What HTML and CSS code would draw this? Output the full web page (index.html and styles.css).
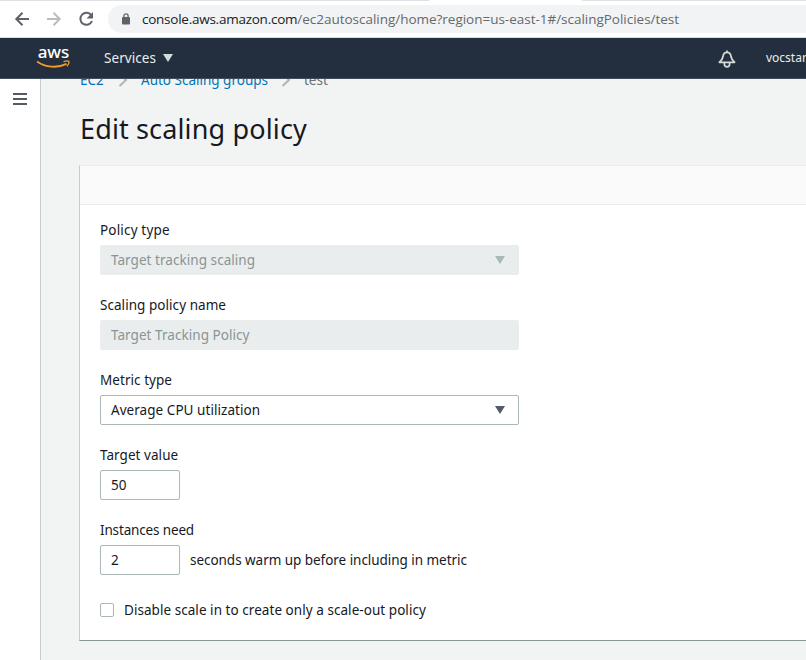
FILE: index.html
```html
<!DOCTYPE html>
<html lang="en">
<head>
<meta charset="utf-8">
<title>Edit scaling policy</title>
<link rel="stylesheet" href="styles.css">
</head>
<body>
<div class="tabstrip"><span class="strip-left"></span><span class="strip-right"></span></div>
<div class="toolbar">
  <svg class="nav-icon" width="16" height="16" viewBox="0 0 16 16"><path d="M15 8H2.500M8.500 1.800 2.300 8l6.200 6.200" fill="none" stroke="#5f6368" stroke-width="2"/></svg>
  <svg class="nav-icon" width="16" height="16" viewBox="0 0 16 16"><path d="M1 8h12.500M7.500 1.800 13.700 8l-6.200 6.200" fill="none" stroke="#babcbe" stroke-width="2"/></svg>
  <svg class="nav-icon" width="16" height="16" viewBox="0 0 16 16"><path d="M13.300 4.300A6 6 0 1 0 14 10" fill="none" stroke="#5f6368" stroke-width="2"/><path d="M15 1v6.500H8.500z" fill="#5f6368"/></svg>
  <div class="omnibox">
    <svg width="10" height="13" viewBox="0 0 10 13"><rect x="1" y="4" width="8" height="7.500" rx="1" fill="#5f6368"/><path d="M2.900 5V2.900a2.100 2.100 0 0 1 4.200 0V5" fill="none" stroke="#5f6368" stroke-width="1.300"/></svg>
    <span class="url"><b>console.aws.amazon.com</b>/ec2autoscaling/home?region=us-east-1#/scalingPolicies/test</span>
  </div>
</div>
<header class="topnav">
  <div class="logo">
    <span class="logo-text">aws</span>
    <svg class="smile" width="35" height="9" viewBox="0 0 35 9"><path d="M1 1.500C9.500 7.600 21.500 8.300 30.500 3.800" fill="none" stroke="#f7981f" stroke-width="1.900"/><path d="M27.500 1.700c2.200-.8 4.500-.9 5.300-.4.400 1.200-.4 3.500-1.900 5" fill="none" stroke="#f7981f" stroke-width="1.400"/></svg>
  </div>
  <span class="services">Services</span>
  <svg class="caret-nav" width="10" height="8" viewBox="0 0 10 8"><path d="M0 0h10L5 8z" fill="#d5dbdb"/></svg>
  <svg class="bell" width="18" height="18" viewBox="0 0 18 18"><path d="M9 .5v2M1.400 12.300C3.800 10.500 4.600 9 5 6.500 5.300 3.700 6.800 2.300 9 2.300S12.700 3.700 13 6.500c.4 2.500 1.200 4 3.600 5.800z" fill="none" stroke="#d5dbdb" stroke-width="1.700" stroke-linejoin="round"/><path d="M6.400 13v1.200a2.600 2.600 0 0 0 5.200 0V13" fill="none" stroke="#d5dbdb" stroke-width="1.700"/></svg>
  <span class="user">vocstar</span>
</header>
<div class="app">
  <aside class="side"><svg width="14" height="12" viewBox="0 0 14 12"><path d="M0 1h14M0 6h14M0 11h14" stroke="#545b64" stroke-width="2"/></svg></aside>
  <main class="main">
    <nav class="crumbs">
      <a class="crumb-ec2">EC2</a>
      <svg width="10" height="14" viewBox="0 0 10 14"><path d="M2 1l6 6-6.500 6" fill="none" stroke="#aab7b8" stroke-width="2"/></svg>
      <a class="crumb-asg">Auto Scaling groups</a>
      <svg width="10" height="14" viewBox="0 0 10 14"><path d="M2 1l6 6-6.500 6" fill="none" stroke="#aab7b8" stroke-width="2"/></svg>
      <span class="crumb-test">test</span>
    </nav>
    <h1><span>Edit scaling policy</span></h1>
    <section class="panel">
      <div class="panel-head"></div>
      <div class="panel-body">
        <div class="field"><label class="wider">Policy type</label><div class="control disabled"><span class="wide">Target tracking scaling</span><svg width="10" height="8" viewBox="0 0 10 8"><path d="M0 0h10L5 8z" fill="#aab7b8"/></svg></div></div>
        <div class="field"><label class="wide">Scaling policy name</label><div class="control disabled"><span class="wide">Target Tracking Policy</span></div></div>
        <div class="field"><label class="wide">Metric type</label><div class="control"><span class="wide">Average CPU utilization</span><svg width="10" height="8" viewBox="0 0 10 8"><path d="M0 0h10L5 8z" fill="#545b64"/></svg></div></div>
        <div class="field"><label class="wide">Target value</label><div class="control small"><span>50</span></div></div>
        <div class="field"><label class="narrower">Instances need</label><div class="row"><div class="control small"><span>2</span></div><span class="narrow">seconds warm up before including in metric</span></div></div>
        <div class="check"><span class="box"></span><span class="wide">Disable scale in to create only a scale-out policy</span></div>
      </div>
    </section>
  </main>
</div>
</body>
</html>
```
FILE: styles.css
```css
* { box-sizing: border-box; }
body {
  margin: 0;
  width: 806px;
  height: 660px;
  overflow: hidden;
  display: flex;
  flex-direction: column;
  background: #f2f3f3;
  color: #16191f;
  font: 13.5px/20px "Noto Sans", sans-serif;
}
span, a, label { white-space: nowrap; }
svg { display: block; flex: none; }

.tabstrip { height: 1px; flex: none; display: flex; justify-content: space-between; background: #fff; }
.strip-left { width: 429px; background: #dee1e6; }
.strip-right { width: 224px; background: #dee1e6; }
.toolbar {
  height: 37px;
  flex: none;
  display: flex;
  align-items: center;
  padding-left: 14px;
  gap: 16px;
  background: #fff;
  border-bottom: 1px solid #dadce0;
}
.omnibox {
  flex: 1;
  height: 28px;
  margin-left: -2px;
  padding-left: 13px;
  display: flex;
  align-items: center;
  gap: 11px;
  border-radius: 14px 0 0 14px;
  background: #f1f3f4;
}
.url { font: 13.5px/20px "Open Sans", sans-serif; color: #65696e; letter-spacing: -0.02px; }
.url b { font-weight: 400; color: #202124; letter-spacing: -0.25px; }

.topnav {
  height: 41px;
  flex: none;
  display: flex;
  align-items: center;
  background: #232f3e;
  border-bottom: 1px solid #414d5c;
  color: #eaeded;
}
.logo { width: 35px; margin: -2px 0 0 36px; display: flex; flex-direction: column; align-items: center; }
.logo-text { font: 500 17px/14px "Noto Sans", sans-serif; color: #fff; }
.smile { margin-top: 1px; }
.services { margin-left: 33px; letter-spacing: 0.06px; }
.caret-nav { margin-left: 7px; }
.bell { margin: 2px 0 0 auto; }
.user { width: 40px; margin-left: 30px; font-size: 12px; }

.app { flex: 1; display: flex; min-height: 0; overflow: hidden; }
.side { width: 41px; padding: 14px 0 0 13px; background: #fff; border-right: 1px solid #c4cccc; }
.main { flex: 1; min-width: 0; padding-left: 39px; }
.crumbs { height: 20px; margin-top: -9px; display: flex; align-items: center; color: #687078; }
.crumbs a { color: #0073bb; }
.crumbs svg { margin: 0 13px; }
.crumb-ec2 { width: 25px; }
h1 { height: 35px; margin: 21px 0 19px; font-size: 27px; line-height: 35px; font-weight: 400; letter-spacing: 0.14px; }
.panel {
  height: 476px;
  margin-left: -1px;
  background: #fff;
  border: 1px solid #eaeded;
  border-left-color: #c4cccc;
  border-bottom-color: #879596;
  border-right: 0;
}
.panel-head { height: 39px; background: #fafafa; border-bottom: 1px solid #eaeded; }
.panel-body { padding: 15px 20px; }
.field { margin-bottom: 20px; }
.field label { display: block; width: max-content; height: 20px; margin-bottom: 5px; }
.wide { letter-spacing: 0.05px; }
.wider { letter-spacing: 0.17px; }
.narrow { letter-spacing: -0.04px; }
.narrower { letter-spacing: -0.15px; }
.control {
  width: 419px;
  height: 30px;
  padding: 0 13px 0 10px;
  display: flex;
  align-items: center;
  justify-content: space-between;
  background: #fff;
  border: 1px solid #aab7b8;
  border-radius: 2px;
}
.disabled { background: #eaeded; border-color: #eaeded; color: #879596; }
.small { width: 80px; }
.row { display: flex; align-items: center; gap: 10px; }
.check { height: 20px; margin-top: 25px; display: flex; align-items: center; gap: 10px; }
.box { width: 14px; height: 14px; border: 1px solid #aab7b8; border-radius: 2px; }
```
